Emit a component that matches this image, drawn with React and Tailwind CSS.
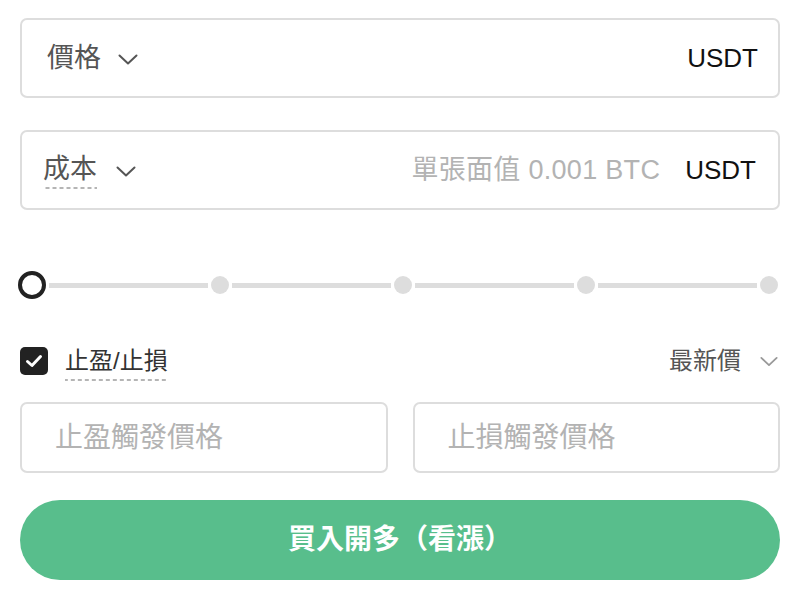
import React from 'react';

const FONT = '"Liberation Sans", "Noto Sans CJK TC", sans-serif';

function Chevron({ className = '' }) {
  return (
    <svg width="20" height="11" viewBox="0 0 20 11" fill="none" className={className}>
      <polyline points="1.5,1.5 10,9.5 18.5,1.5" stroke="currentColor" strokeWidth="2" strokeLinecap="round" strokeLinejoin="round" />
    </svg>
  );
}

const dashed = 'bg-[linear-gradient(to_right,#b5b5b5_60%,transparent_0)] bg-size-[7px_2px] bg-bottom bg-repeat-x';

function Slider() {
  const dots = [0, 1, 2, 3];
  return (
    <div className="flex items-center h-[28px] -ml-[2px] mr-[2px]">
      <div className="w-[28px] h-[28px] rounded-full border-[4px] border-[#222] bg-white shrink-0" />
      {dots.map((d) => (
        <React.Fragment key={d}>
          <div className="flex-1 h-[5px] bg-[#ddd] mx-[3px]" />
          <div className="w-[18px] h-[18px] rounded-full bg-[#ddd] shrink-0" />
        </React.Fragment>
      ))}
    </div>
  );
}

export default function App() {
  return (
    <div className="w-[796px] h-[594px] bg-white pl-[20px] pr-[16px] pt-[18px]" style={{ fontFamily: FONT }}>
      {/* price */}
      <div className="h-[80px] border-2 border-[#ddd] rounded-[7px] flex items-center pl-[25px] pr-[20px]">
        <span className="text-[27px] text-[#555]">價格</span>
        <Chevron className="ml-[17px] text-[#555] mt-[2px]" />
        <span className="ml-auto text-[26px] text-[#111]">USDT</span>
      </div>

      {/* cost */}
      <div className="mt-[32px] h-[80px] border-2 border-[#ddd] rounded-[7px] flex items-center pl-[21px] pr-[22px]">
        <span className={`text-[27px] text-[#555] leading-[34px] pb-[3px] ${dashed}`}>成本</span>
        <Chevron className="ml-[19px] text-[#555] mt-[2px]" />
        <span className="ml-auto text-[27px] text-[#b3b3b3] tracking-[0.3px]">單張面值 0.001 BTC</span>
        <span className="ml-[25px] text-[26px] text-[#111]">USDT</span>
      </div>

      {/* leverage slider */}
      <div className="mt-[61px]">
        <Slider />
      </div>

      {/* TP/SL toggle */}
      <div className="mt-[42px] flex items-center justify-between h-[40px]">
        <div className="flex items-center">
          <div className="w-[28px] h-[28px] rounded-[5px] bg-[#222] flex items-center justify-center">
            <svg width="18" height="14" viewBox="0 0 18 14" fill="none">
              <polyline points="2.5,7.5 7,11.5 15.5,2.5" stroke="white" strokeWidth="3" strokeLinecap="round" strokeLinejoin="round" />
            </svg>
          </div>
          <span className={`ml-[17px] text-[24px] text-[#333] pt-[6px] pb-[6px] leading-[28px] ${dashed}`}>止盈/止損</span>
        </div>
        <div className="flex items-center">
          <span className="text-[24px] text-[#555]">最新價</span>
          <Chevron className="ml-[19px] mr-[2px] text-[#999] w-[18px]" />
        </div>
      </div>

      {/* trigger prices */}
      <div className="mt-[21px] grid grid-cols-2 gap-[25px]">
        <div className="h-[71px] border-2 border-[#ddd] rounded-[7px] flex items-center pl-[33px]">
          <span className="text-[28px] text-[#b3b3b3]">止盈觸發價格</span>
        </div>
        <div className="h-[71px] border-2 border-[#ddd] rounded-[7px] flex items-center pl-[33px]">
          <span className="text-[28px] text-[#b3b3b3]">止損觸發價格</span>
        </div>
      </div>

      {/* submit */}
      <button className="mt-[27px] w-full h-[80px] rounded-full bg-[#58be8c] text-white text-[28px] font-bold flex items-center justify-center">
        買入開多（看漲）
      </button>
    </div>
  );
}
